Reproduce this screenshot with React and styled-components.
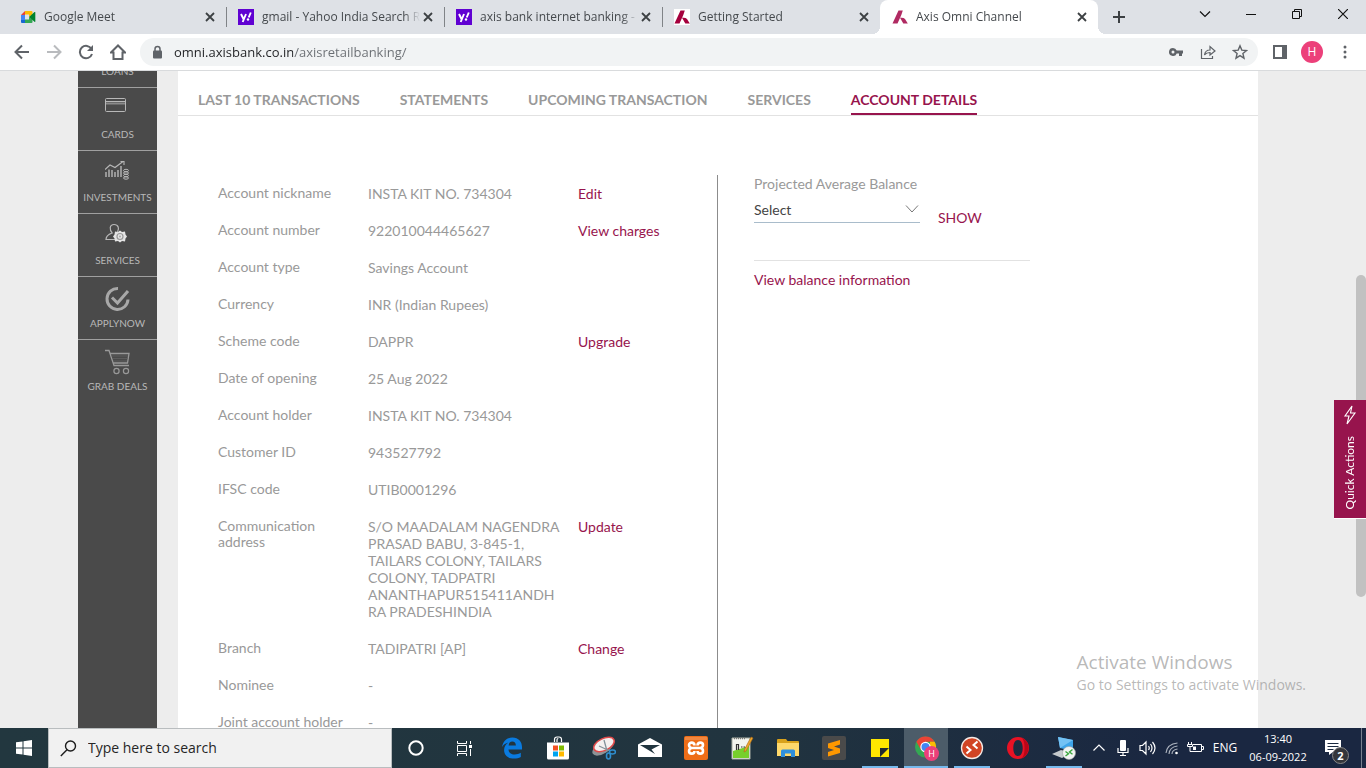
import React from "react";
import styled, { createGlobalStyle } from "styled-components";

const maroon = "#97144d";
const ui = '"Open Sans", "Noto Sans", sans-serif';
const lato = 'Lato, "Open Sans", sans-serif';

const Global = createGlobalStyle`
  * { box-sizing: border-box; }
  html, body, #root { height: 100%; }
  body { margin: 0; overflow: hidden; font-family: ${lato}; }
  button { margin: 0; padding: 0; border: 0; background: none; color: inherit; font: inherit; }
  ul, dl, dd { margin: 0; padding: 0; list-style: none; }
  a { text-decoration: none; }
  svg { display: block; flex: none; }
`;

const Shell = styled.div`
  display: flex;
  flex-direction: column;
  height: 100%;
`;

/* ---------- browser tabs ---------- */
const TabStrip = styled.header`
  display: flex;
  flex: none;
  height: 34px;
  padding-left: 8px;
  background: #dee1e6;
  font: 12px/16px ${ui};
  color: #45494d;
`;
const BrowserTab = styled.div`
  position: relative;
  display: flex;
  align-items: center;
  flex: 0 1 218px;
  min-width: 0;
  padding: 0 8px 0 12px;
  border-radius: 8px 8px 0 0;
  background: ${(p) => (p.$active ? "#fff" : "transparent")};
  &::before {
    content: "";
    position: absolute;
    left: ${(p) => (p.$active ? "-8px" : "0")};
    bottom: ${(p) => (p.$active ? "0" : "7px")};
    width: ${(p) => (p.$active ? "8px" : "1px")};
    height: ${(p) => (p.$active ? "8px" : "20px")};
    background: ${(p) =>
      p.$active ? "radial-gradient(circle at 0 0, transparent 8px, #fff 8px)" : p.$first ? "transparent" : "#808387"};
  }
  &::after {
    content: "";
    display: ${(p) => (p.$active ? "block" : "none")};
    position: absolute;
    right: -8px;
    bottom: 0;
    width: 8px;
    height: 8px;
    background: radial-gradient(circle at 100% 0, transparent 8px, #fff 8px);
  }
`;
const TabTitle = styled.span`
  flex: 1;
  min-width: 0;
  margin: 0 0 0 8px;
  overflow: hidden;
  white-space: nowrap;
  mask-image: linear-gradient(to right, #000 calc(100% - 16px), transparent);
`;
const IconButton = styled.button`
  display: grid;
  place-items: center;
  flex: none;
  width: ${(p) => p.$w || 16}px;
  height: ${(p) => p.$h || 16}px;
`;
const WindowButtons = styled.div`
  display: flex;
  margin-left: auto;
  color: #111;
`;

/* ---------- toolbar ---------- */
const Toolbar = styled.div`
  display: flex;
  align-items: center;
  flex: none;
  height: 37px;
  padding: 0 5px 0 6px;
  border-bottom: 1px solid #d9dbdd;
  background: #fff;
  color: #5f6368;
`;
const AddressBar = styled.div`
  display: flex;
  align-items: center;
  flex: 1;
  height: 28px;
  margin: 0 6px;
  padding: 0 2px 0 10px;
  border-radius: 14px;
  background: #f1f3f4;
`;
const Address = styled.input`
  flex: 1;
  min-width: 0;
  height: 24px;
  padding: 0 0 0 10px;
  border: 0;
  outline: 0;
  font: 13px/20px ${ui};
  color: transparent;
  background: linear-gradient(to right, #202124 129px, #6a6e73 129px);
  background-clip: text;
`;
const Avatar = styled.button`
  width: 22px;
  height: 22px;
  margin: 0 6px 0 5px;
  border-radius: 50%;
  background: #ec407a;
  color: #fff;
  font: 12px/22px ${ui};
`;

/* ---------- bank page ---------- */
const Page = styled.div`
  position: relative;
  display: flex;
  flex: 1;
  min-height: 0;
  overflow: hidden;
  padding: 0 108px 0 78px;
  gap: 21px;
  background: #ededed;
`;
const Sidebar = styled.nav`
  flex: none;
  width: 79px;
  background: #4a4a4a;
`;
const SideItem = styled.li`
  height: ${(p) => (p.$clipped ? 17 : 63)}px;
  overflow: hidden;
  border-bottom: 1px solid ${(p) => (p.$last ? "transparent" : "#a0a0a0")};
  display: flex;
  flex-direction: column;
  justify-content: flex-end;
`;
const SideLink = styled.a`
  display: flex;
  flex-direction: column;
  flex: none;
  height: 62px;
  padding: 9px 0;
  color: #b8b8b8;
  font-size: 10px;
  line-height: 14px;
  text-align: center;
  svg { margin-left: 27px; }
  span { margin-top: auto; }
`;
const Card = styled.main`
  display: flex;
  flex-direction: column;
  flex: 1;
  min-width: 0;
  background: #fff;
`;
const SectionTabs = styled.nav`
  display: flex;
  flex: none;
  align-items: flex-end;
  gap: 40px;
  height: 45px;
  padding: 0 20px;
  border-bottom: 1px solid #e2e2e2;
`;
const SectionTab = styled.a`
  padding-bottom: 4px;
  border-bottom: 2px solid ${(p) => (p.$active ? maroon : "transparent")};
  color: ${(p) => (p.$active ? maroon : "#999")};
  font-size: 14px;
  font-weight: 700;
  line-height: 18px;
  white-space: nowrap;
`;
const Columns = styled.div`
  display: flex;
  flex: 1;
  min-height: 0;
  margin-top: 59px;
  color: #999;
  font-size: 14px;
  line-height: 17px;
`;
const Details = styled.dl`
  flex: none;
  width: 540px;
  padding: 10px 0 0 40px;
  border-right: 1px solid #8c8c8c;
`;
const Detail = styled.div`
  display: grid;
  grid-template-columns: 140px 194px 1fr;
  column-gap: 10px;
  margin-bottom: 20px;
  dt { line-height: 16px; }
`;
const Value = styled.dd`
  overflow-wrap: break-word;
`;
const ActionCell = styled(Value)`
  padding-left: 6px;
`;
const BankLink = styled.a`
  color: ${maroon};
`;
const Balance = styled.section`
  flex: 1;
  padding-left: 36px;
`;
const BalanceForm = styled.form`
  display: flex;
  gap: 18px;
  width: 276px;
  padding-bottom: 34px;
  margin-bottom: 10px;
  border-bottom: 1px solid #e2e2e2;
`;
const Field = styled.div`
  position: relative;
  display: flex;
  flex-direction: column;
  align-self: flex-start;
  width: 166px;
  svg { position: absolute; right: 1px; bottom: 10px; pointer-events: none; }
`;
const Select = styled.select`
  appearance: none;
  height: 31px;
  padding: 4px 20px 0 0;
  border: 0;
  border-bottom: 1px solid #a9bccb;
  border-radius: 0;
  background: transparent;
  color: #444;
  font: 14px/17px ${lato};
`;
const ShowButton = styled.button`
  align-self: flex-start;
  margin-top: 34px;
  color: ${maroon};
`;
const Scrollbar = styled.div`
  position: absolute;
  right: 0;
  top: 31%;
  bottom: 20%;
  width: 10px;
  border-radius: 5px;
  background: #c1c1c1;
`;
const QuickActions = styled.button`
  position: absolute;
  right: 0;
  top: 50%;
  display: flex;
  flex-direction: column;
  align-items: center;
  gap: 11px;
  width: 32px;
  height: 119px;
  padding-top: 5px;
  border-bottom: 1px solid #fff;
  background: ${maroon};
  color: #fff;
  font-size: 12px;
  line-height: 16px;
  span { writing-mode: vertical-rl; transform: rotate(180deg); }
`;
const Watermark = styled.div`
  position: absolute;
  right: 60px;
  bottom: 33px;
  color: rgba(140, 140, 140, 0.62);
  font: 14px/20px ${ui};
  white-space: nowrap;
  strong { display: block; font-size: 19px; font-weight: 400; line-height: 26px; }
`;

/* ---------- taskbar ---------- */
const Taskbar = styled.footer`
  display: flex;
  flex: none;
  height: 40px;
  background: linear-gradient(to right, #22373f, #21343f 55%, #1a2741 85%);
  color: #fff;
  font: 12px/18px ${ui};
`;
const SearchBox = styled.label`
  display: flex;
  align-items: center;
  width: 344px;
  padding-left: 11px;
  gap: 11px;
  border: 1px solid #b9bdbf;
  background: #f1f1f1;
  color: #1c1c1c;
  input {
    flex: 1;
    min-width: 0;
    padding: 0;
    border: 0;
    outline: 0;
    background: none;
    font: 14px/20px ${ui};
    &::placeholder { color: #262626; opacity: 1; }
  }
`;
const Apps = styled.div`
  display: flex;
  gap: 2px;
  margin-left: 2px;
`;
const AppButton = styled.button`
  display: grid;
  place-items: center;
  width: 44px;
  height: 40px;
  background: ${(p) => (p.$active ? "#4c5c69" : "transparent")};
  position: relative;
  &::after {
    content: "";
    position: absolute;
    left: ${(p) => (p.$active ? 0 : 4)}px;
    right: ${(p) => (p.$active ? 0 : 4)}px;
    bottom: 0;
    height: 2px;
    background: ${(p) => (p.$open ? "#76b9ed" : "transparent")};
  }
`;
const Tray = styled.div`
  display: flex;
  align-items: center;
  margin-left: auto;
`;
const Clock = styled.time`
  width: 70px;
  font-size: 11px;
  text-align: center;
  white-space: nowrap;
`;
const Lang = styled.button`
  width: 36px;
`;
const Notices = styled.button`
  position: relative;
  display: grid;
  place-items: center;
  width: 48px;
  height: 40px;
  padding-right: 8px;
  b {
    position: absolute;
    left: 19px;
    top: 19px;
    width: 17px;
    height: 17px;
    border: 1px solid #888;
    border-radius: 50%;
    background: #34363b;
    font: 700 11px/15px ${ui};
  }
`;
const DesktopPeek = styled.button`
  width: 5px;
  height: 40px;
  border-left: 1px solid #77808e;
`;

/* ---------- drawings ---------- */
const Svg = ({ w = 16, h = w, box, children, ...rest }) => (
  <svg width={w} height={h} viewBox={box || `0 0 ${w} ${h}`} fill="none" aria-hidden="true" {...rest}>
    {children}
  </svg>
);
const line = { stroke: "currentColor", strokeWidth: 2 };
const thin = { stroke: "currentColor", strokeWidth: 1.2 };

const Meet = () => (
  <Svg>
    <path d="M1 6l4-4v4z" fill="#ea4335" />
    <path d="M5 2h6.500q1 0 1 1v2.500L9 8V5.500H5z" fill="#fbbc04" />
    <path d="M1 6h4v5H1z" fill="#4285f4" />
    <path d="M1 11h4v3H2q-1 0-1-1z" fill="#1967d2" />
    <path d="M5 10.500h4V8l3.500 2.500V13q0 1-1 1H5z" fill="#34a853" />
    <path d="M9 8l5.500-5q.8-.4.800.5v9q0 .8-.8.300z" fill="#00832d" />
  </Svg>
);
const Yahoo = () => (
  <Svg>
    <path d="M0 0h16v16H0z" fill="#6001d2" />
    <path d="M3 5l2.500 5M8 5l-3.300 8M12.800 3.500L10.700 8.500" stroke="#fff" strokeWidth="1.900" />
    <circle cx="10" cy="10.500" r="1.200" fill="#fff" />
  </Svg>
);
const Axis = ({ color = "#a5003d", tile }) => (
  <Svg>
    {tile && <path d="M0 0h16v16H0z" fill="#fff" />}
    <path d="M6.500 1.500h4.300L9.300 6 5.500 14.500H.5zM8 8.800q3.500-.6 5 1.200l2.800 4.500h-4.500z" fill={color} />
  </Svg>
);
const Close = () => <Svg w={16}><path d="M4 4l8 8M12 4l-8 8" stroke="#3c4043" strokeWidth="1.800" /></Svg>;

const appIcons = {
  Edge: (
    <Svg w={24}>
      <path d="M2 11C3.200 5 7 1.500 12.500 1.500c6 0 9.500 4.400 9.500 9.500v2.500H8.500c.2 3.300 2.800 5 6.200 5 2.300 0 4.300-.6 6.100-1.700v4.300c-2 1-4.200 1.500-6.700 1.500-6.200 0-10-3.400-10-8.600 0-3.100 1.500-5.800 4.300-7.400C5.700 7.200 3.600 8.800 2 11zm6.600-1.500h7.300c-.1-2.700-1.400-4-3.600-4s-3.400 1.500-3.700 4z" fill="#0a7be0" />
    </Svg>
  ),
  Store: (
    <Svg w={24}>
      <path d="M8.500 6V3.500Q8.500 1 11 1h2q2.500 0 2.500 2.500V6M11 6V3.800q0-1.300 1.300-1.300" stroke="#fff" strokeWidth="1.200" />
      <path d="M1 6.500h22V22q0 1.500-1.500 1.500h-19Q1 23.500 1 22z" fill="#fff" />
      <path d="M7 9.500h5v5H7z" fill="#f25022" /><path d="M13 9.500h5v5h-5z" fill="#7fba00" />
      <path d="M7 15.500h5v5H7z" fill="#00a4ef" /><path d="M13 15.500h5v5h-5z" fill="#ffb900" />
    </Svg>
  ),
  "Snipping Tool": (
    <Svg w={24}>
      <ellipse cx="11" cy="11.500" rx="12" ry="6" transform="rotate(-32 11 11.500)" fill="#8c9397" />
      <ellipse cx="12" cy="8.500" rx="11" ry="6" transform="rotate(-25 12 8.500)" fill="#f4f0f0" stroke="#df4a4a" strokeWidth="1.500" />
      <path d="M12 4l3 11M7 10l11 5" stroke="#84929b" strokeWidth="1.300" />
      <ellipse cx="20.500" cy="16" rx="3" ry="2" stroke="#2f8fd0" strokeWidth="1.600" />
      <ellipse cx="16.500" cy="20" rx="2" ry="3" stroke="#2f8fd0" strokeWidth="1.600" />
    </Svg>
  ),
  Mail: (
    <Svg w={24}>
      <path d="M12 2l12 6.500V21H0V8.500z" fill="#fff" />
      <path d="M2 9h20l-8.500 4.500L17 18 2 9z" fill="#21353f" />
    </Svg>
  ),
  XAMPP: (
    <Svg w={24}>
      <rect width="24" height="24" rx="2" fill="#ee6d17" /><path d="M1 1h22v3H1z" fill="#f59a5a" opacity=".6" />
      <path d="M10.500 9.500C10.500 5.500 5 6 5 9c0 2 1.500 3 3 3-1.500 0-3 1-3 3 0 3.500 5.500 3.500 5.500 0M13.500 9.500c0-4 5.500-3.500 5.500-.5 0 2-1.500 3-3 3 1.500 0 3 1 3 3 0 3.500-5.500 3.500-5.500 0M8 12h8" stroke="#fff" strokeWidth="2.600" />
    </Svg>
  ),
  "Notepad++": (
    <Svg w={24}>
      <path d="M2 2h18v21H2z" fill="#f3f5ef" stroke="#a9aea4" /><path d="M3 15l16-5v12H3z" fill="#77cf2c" />
      <path d="M4 2.500h12" stroke="#777" strokeWidth="1.500" strokeDasharray="1 1" />
      <path d="M6.500 14V8.500h2V14M11 11h1.500M13.500 11H15" stroke="#333" strokeWidth="1.200" />
      <path d="M21 1l2 1-7 13-2 1 .5-2.500z" fill="#f0a72c" stroke="#a76818" strokeWidth=".6" />
    </Svg>
  ),
  "File Explorer": (
    <Svg w={24}>
      <path d="M1 4q0-1 1-1h8l1.500 2H22q1 0 1 1v14H1z" fill="#d9a21b" /><path d="M1 7h22v13H1z" fill="#ffd96b" />
      <path d="M5 21v-6q0-1.500 1.500-1.500h11Q19 13.500 19 15v6h-4v-3.500H9V21z" fill="#2f8fdb" />
    </Svg>
  ),
  "Sublime Text": (
    <Svg w={24}>
      <rect width="24" height="24" rx="2" fill="#4a4a4a" />
      <path d="M18 4v4.500l-6 2 6 2v4.500L6 20.500V16l6-2-6-2V7.500z" fill="#ff9800" />
    </Svg>
  ),
  "Sticky Notes": (
    <Svg w={24}>
      <path d="M3 3h18v18H3z" fill="#ffe600" /><path d="M12 12h9l-9 9z" fill="#222b31" />
    </Svg>
  ),
  Chrome: (
    <Svg w={26}>
      <circle cx="12.500" cy="12" r="10.500" fill="#34a853" />
      <path d="M3.400 6.700A10.500 10.500 0 0 1 21.600 6.700H12.500L8 15z" fill="#ea4335" />
      <path d="M21.600 6.700A10.500 10.500 0 0 1 12.500 22.500l4.500-7.500V6.700z" fill="#fbbc04" />
      <circle cx="12.500" cy="12" r="5.200" fill="#fff" /><circle cx="12.500" cy="12" r="4" fill="#4285f4" />
      <circle cx="18.500" cy="18.500" r="7.500" fill="#ec407a" />
      <text x="18.500" y="22" fill="#fff" fontSize="9" fontFamily="Open Sans" textAnchor="middle">H</text>
    </Svg>
  ),
  "Remote Desktop": (
    <Svg w={24}>
      <circle cx="12" cy="12" r="10.500" fill="#d14424" stroke="#f4e9e5" strokeWidth="1.300" />
      <path d="M6.500 10.500l4 3.500-4 3.500M17.500 5.500l-4 3.500 4 3.500" stroke="#fff" strokeWidth="2" />
    </Svg>
  ),
  Opera: (
    <Svg w={24}>
      <path fillRule="evenodd" d="M12 1a11 11 0 1 0 0 22 11 11 0 0 0 0-22zm0 3c3 0 4.700 3.500 4.700 8S15 20 12 20s-4.700-3.500-4.700-8S9 4 12 4z" fill="#e81224" />
      <path d="M15 1.500A11 11 0 0 1 15 22.500c3-2 3.500-6 3.500-10.500S18 3.500 15 1.500z" fill="#a70014" opacity=".7" />
    </Svg>
  ),
  "Remote Session": (
    <Svg w={24}>
      <path d="M6 1l15 3v11L8 12z" fill="#3ea5ea" /><path d="M6 1l15 3L8 12z" fill="#74c2f4" />
      <path d="M0 18l9-4 10 3-9 5z" fill="#c5cacd" />
      <circle cx="17" cy="17" r="6.500" fill="#f2f4f2" stroke="#a0a5a5" strokeWidth=".6" />
      <path d="M13.500 15.500l3 2.200-3 2.300M20.500 13.500l-3 2.500 3 2.200" stroke="#38a63c" strokeWidth="1.400" />
    </Svg>
  ),
};

const Coin = ({ y }) => <ellipse cx="21" cy={y} rx="2.500" ry="1.200" stroke="currentColor" />;
const sideIcons = {
  CARDS: (
    <Svg w={22} h={18}>
      <rect x=".5" y="1.500" width="20" height="13" rx="1" stroke="currentColor" />
      <path d="M1 4.500h19" stroke="currentColor" /><path d="M1 6.500h19" stroke="#8a8a8a" strokeWidth="2" />
    </Svg>
  ),
  INVESTMENTS: (
    <Svg w={25} h={22}>
      <path d="M1 17v-5M4 17V9.500M7 17v-7M10 17v-5M13 17v-7M16 17V6" stroke="currentColor" strokeWidth="1.400" />
      <path d="M0 9.500l5-4.500 5 2.500 8-6M15.500 1.500H19V5" stroke="currentColor" strokeWidth="1.100" />
      <Coin y={10.5} /><Coin y={13} /><Coin y={15.5} /><Coin y={18} />
    </Svg>
  ),
  SERVICES: (
    <Svg w={22} h={24}>
      <path d="M7 10C3 11.500 1 13.500 1 16.500h9M7.500 10.500C4 7 4.500 1.500 9 1.500s5.500 4 3.500 7.500" stroke="currentColor" strokeWidth="1.200" />
      <path d="M15 7.500l2 1.500 3-.5.500 3 1.500 2-1.500 2-.5 3-3-.500-2 1.500-2-1.500-3 .500-.5-3L8 13.500l1.500-2 .500-3 3 .5z" fill="#e4e4e4" />
      <circle cx="15" cy="13.500" r="3" stroke="#999" strokeWidth="1.200" /><circle cx="15" cy="13.500" r="1" fill="#aaa" />
    </Svg>
  ),
  APPLYNOW: (
    <Svg w={26}>
      <path d="M13 2.500A10.500 10.500 0 1 0 23 13.500" stroke="#a8a8a8" strokeWidth="3" />
      <path d="M7 11.500l5.500 5.500L23 5" stroke="#a8a8a8" strokeWidth="3" />
    </Svg>
  ),
  "GRAB DEALS": (
    <Svg w={26}>
      <path d="M0 1.500h4l5 15h15M5.500 4.500H24l-1.500 9.500H8.500" stroke="#999" strokeWidth="1.300" />
      <path d="M6.500 7H23M7.500 9.500H23M8 12h14" stroke="#666" strokeWidth=".7" />
      <circle cx="11.500" cy="22" r="2.600" stroke="#999" strokeWidth="1.200" /><circle cx="21" cy="22" r="2.600" stroke="#999" strokeWidth="1.200" />
    </Svg>
  ),
};

const browserTabs = [
  { title: "Google Meet", icon: <Meet />, first: true },
  { title: "gmail - Yahoo India Search Results", icon: <Yahoo /> },
  { title: "axis bank internet banking - Yahoo India", icon: <Yahoo /> },
  { title: "Getting Started", icon: <Axis tile /> },
  { title: "Axis Omni Channel", icon: <Axis color="#b02a62" />, active: true },
];
const sideItems = ["LOANS", "CARDS", "INVESTMENTS", "SERVICES", "APPLYNOW", "GRAB DEALS"];
const sections = ["LAST 10 TRANSACTIONS", "STATEMENTS", "UPCOMING TRANSACTION", "SERVICES", "ACCOUNT DETAILS"];
const details = [
  ["Account nickname", "INSTA KIT NO. 734304", "Edit"],
  ["Account number", "922010044465627", "View charges"],
  ["Account type", "Savings Account"],
  ["Currency", "INR (Indian Rupees)"],
  ["Scheme code", "DAPPR", "Upgrade"],
  ["Date of opening", "25 Aug 2022"],
  ["Account holder", "INSTA KIT NO. 734304"],
  ["Customer ID", "943527792"],
  ["IFSC code", "UTIB0001296"],
  ["Communication address", "S/O MAADALAM NAGENDRA PRASAD BABU, 3-845-1, TAILARS COLONY, TAILARS COLONY, TADPATRI ANANTHAPUR515411ANDHRA PRADESHINDIA", "Update"],
  ["Branch", "TADIPATRI [AP]", "Change"],
  ["Nominee", "-"],
  ["Joint account holder", "-"],
];
const openApps = ["Sticky Notes", "Chrome", "Remote Desktop", "Remote Session"];

function BrowserChrome() {
  return (
    <>
      <TabStrip>
        {browserTabs.map((t) => (
          <BrowserTab key={t.title} $active={t.active} $first={t.first}>
            {t.icon}
            <TabTitle>{t.title}</TabTitle>
            <IconButton aria-label={`Close ${t.title}`}><Close /></IconButton>
          </BrowserTab>
        ))}
        <IconButton aria-label="New tab" $w={42} $h={34}>
          <Svg w={14}><path d="M7 1v12M1 7h12" stroke="#3c4043" strokeWidth="2" /></Svg>
        </IconButton>
        <WindowButtons>
          <IconButton aria-label="Search tabs" $w={46} $h={28}><Svg w={12}><path d="M1 3.500l5 5 5-5" {...thin} /></Svg></IconButton>
          <IconButton aria-label="Minimize" $w={46} $h={28}><Svg w={10}><path d="M0 5.500h10" stroke="currentColor" /></Svg></IconButton>
          <IconButton aria-label="Restore" $w={46} $h={28}><Svg w={10}><path d="M.5 2.500h7v7h-7zM2.500 2V.5h7v7H8" stroke="currentColor" /></Svg></IconButton>
          <IconButton aria-label="Close window" $w={46} $h={28}><Svg w={10}><path d="M0 0l10 10M10 0L0 10" {...thin} /></Svg></IconButton>
        </WindowButtons>
      </TabStrip>
      <Toolbar>
        <IconButton aria-label="Back" $w={32} $h={32}><Svg><path d="M15 8H2M8 1.500L1.500 8 8 14.500" {...line} /></Svg></IconButton>
        <IconButton aria-label="Forward" $w={32} $h={32}><Svg><path d="M1 8h13M8 1.500L14.500 8 8 14.500" stroke="#b9bbbe" strokeWidth="2" /></Svg></IconButton>
        <IconButton aria-label="Reload" $w={32} $h={32}><Svg><path d="M13.500 5A6.200 6.200 0 1 0 14 10" {...line} /><path d="M15 1v6H9z" fill="currentColor" /></Svg></IconButton>
        <IconButton aria-label="Home" $w={32} $h={32}><Svg><path d="M1 8.500h2.500V15h9V8.500H15L8 1.500z" {...line} /></Svg></IconButton>
        <AddressBar>
          <Svg w={14}><rect x="3" y="5.500" width="9" height="8" rx="1" fill="currentColor" /><path d="M5 6V4q0-2.500 2.500-2.500T10 4v2" stroke="currentColor" strokeWidth="1.500" /></Svg>
          <Address aria-label="Address" defaultValue="omni.axisbank.co.in/axisretailbanking/" />
          <IconButton aria-label="Passwords" $w={32} $h={28}>
            <Svg><path fillRule="evenodd" d="M5 4a4 4 0 1 0 3.700 5.500H11V12h3V9.500h1v-3H8.700A4 4 0 0 0 5 4zm0 2.500a1.500 1.500 0 1 1 0 3 1.500 1.500 0 0 1 0-3z" fill="currentColor" /></Svg>
          </IconButton>
          <IconButton aria-label="Share" $w={32} $h={28}>
            <Svg><path d="M1.500 5v9.500h11V12M4.500 11c.5-3.500 2.500-5 5.500-5V2.500l5 4.500-5 4V8.500c-2.500 0-4 .5-5.500 2.500z" {...thin} /></Svg>
          </IconButton>
          <IconButton aria-label="Bookmark" $w={32} $h={28}>
            <Svg><path d="M8 1.800l1.800 4.300 4.700.4-3.600 3 1.100 4.700-4-2.500-4 2.500 1.100-4.700-3.600-3 4.700-.4z" stroke="currentColor" strokeWidth="1.400" /></Svg>
          </IconButton>
        </AddressBar>
        <IconButton aria-label="Side panel" $w={32} $h={32}><Svg w={14}><path fillRule="evenodd" d="M0 0h14v14H0zM2 2v10h7V2z" fill="currentColor" /></Svg></IconButton>
        <Avatar aria-label="Profile">H</Avatar>
        <IconButton aria-label="Menu" $w={32} $h={32}>
          <Svg><circle cx="8" cy="3" r="1.500" fill="currentColor" /><circle cx="8" cy="8" r="1.500" fill="currentColor" /><circle cx="8" cy="13" r="1.500" fill="currentColor" /></Svg>
        </IconButton>
      </Toolbar>
    </>
  );
}

function WindowsTaskbar() {
  return (
    <Taskbar>
      <IconButton aria-label="Start" $w={48} $h={40}>
        <Svg><path d="M0 2.300L6.500 1.400v6.100H0zM7.500 1.200L16 0v7.500H7.500zM0 8.500h6.500v6.100L0 13.700zM7.500 8.500H16V16l-8.500-1.200z" fill="#fff" /></Svg>
      </IconButton>
      <SearchBox>
        <Svg w={17}><circle cx="10.500" cy="6" r="5" stroke="currentColor" strokeWidth="1.400" /><path d="M7 9.700L.8 16" stroke="currentColor" strokeWidth="1.400" /></Svg>
        <input type="search" aria-label="Search Windows" placeholder="Type here to search" />
      </SearchBox>
      <IconButton aria-label="Cortana" $w={48} $h={40}><Svg><circle cx="8" cy="8" r="6.700" {...line} /></Svg></IconButton>
      <IconButton aria-label="Task view" $w={48} $h={40}>
        <Svg w={17}><path d="M1.500 1v2.500h9V1M1.500 16v-2.500h9V16M1.500 5.500h9v6h-9zM14.500 1v3M14.500 9v7" stroke="currentColor" /><path d="M13 5h3v3h-3z" fill="currentColor" /></Svg>
      </IconButton>
      <Apps>
        {Object.keys(appIcons).map((name) => (
          <AppButton key={name} aria-label={name} $active={name === "Chrome"} $open={openApps.includes(name)}>
            {appIcons[name]}
          </AppButton>
        ))}
      </Apps>
      <Tray>
        <IconButton aria-label="Hidden icons" $w={24} $h={40}><Svg w={12}><path d="M0.500 8.500L6 3l5.500 5.500" {...thin} /></Svg></IconButton>
        <IconButton aria-label="Microphone" $w={24} $h={40}><Svg><rect x="5" y="0" width="6" height="11" rx="1" fill="#fff" /><path d="M3 8v4.500h10V8M8 12.500V15M5 15.500h6" {...thin} /></Svg></IconButton>
        <IconButton aria-label="Volume" $w={25} $h={40}><Svg w={17} h={16}><path d="M1 5.500h2.500L7 2v12l-3.500-3.500H1zM9.500 6q1.500 2 0 4M11.500 4q3 4 0 8M13.500 2q5 6 0 12" {...thin} /></Svg></IconButton>
        <IconButton aria-label="Network" $w={24} $h={40}><Svg w={14}><g stroke="#aeb5c0" strokeWidth="1.100"><path d="M1 12Q2 3 12.500 2M4 13Q4.500 6 12.500 5M7 13Q7 9 12.500 8" /></g><circle cx="11.500" cy="12" r="1.300" fill="#fff" /></Svg></IconButton>
        <IconButton aria-label="Battery" $w={23} $h={40}><Svg w={17} h={14}><path d="M6 3.500h8.500v7H5.500M14.500 5.500h2v3h-2M1.500 1v2M4.500 1v2M.5 3.500h5v2h-5zM3 6v4.500h3" stroke="currentColor" /><path d="M6 5.500h3V9H6z" fill="#fff" /></Svg></IconButton>
        <Lang>ENG</Lang>
        <Clock dateTime="2022-09-06T13:40">13:40<br />06-09-2022</Clock>
        <Notices aria-label="2 notifications">
          <Svg w={16}><path d="M0 0h16v12H8l-4 3v-3H0z" fill="#fff" /><path d="M2.500 3.500h11M2.500 6.500h11M2.500 9.500h6" stroke="#1b2a40" /></Svg>
          <b>2</b>
        </Notices>
        <DesktopPeek aria-label="Show desktop" />
      </Tray>
    </Taskbar>
  );
}

export default function App() {
  return (
    <Shell>
      <Global />
      <BrowserChrome />
      <Page>
        <Sidebar aria-label="Main">
          <ul>
            {sideItems.map((name, i) => (
              <SideItem key={name} $clipped={i === 0} $last={i === sideItems.length - 1}>
                <SideLink href="#">{sideIcons[name]}<span>{name}</span></SideLink>
              </SideItem>
            ))}
          </ul>
        </Sidebar>
        <Card>
          <SectionTabs aria-label="Account sections">
            {sections.map((s) => (
              <SectionTab key={s} href="#" $active={s === "ACCOUNT DETAILS"}>{s}</SectionTab>
            ))}
          </SectionTabs>
          <Columns>
            <Details>
              {details.map(([label, value, action]) => (
                <Detail key={label}>
                  <dt>{label}</dt>
                  <Value>{value}</Value>
                  {action && <ActionCell><BankLink href="#">{action}</BankLink></ActionCell>}
                </Detail>
              ))}
            </Details>
            <Balance>
              <BalanceForm onSubmit={(e) => e.preventDefault()}>
                <Field>
                  <label htmlFor="period">Projected Average Balance</label>
                  <Select id="period"><option>Select</option></Select>
                  <Svg w={14} h={8}><path d="M1 .500l6 6.500 6-6.500" stroke="#777" /></Svg>
                </Field>
                <ShowButton type="submit">SHOW</ShowButton>
              </BalanceForm>
              <BankLink href="#">View balance information</BankLink>
            </Balance>
          </Columns>
        </Card>
        <Scrollbar />
        <QuickActions>
          <Svg w={14} h={20}><path d="M9 1L2 11h4l-2 8 8-11H7.500z" stroke="currentColor" strokeWidth="1.100" /></Svg>
          <span>Quick Actions</span>
        </QuickActions>
        <Watermark><strong>Activate Windows</strong>Go to Settings to activate Windows.</Watermark>
      </Page>
      <WindowsTaskbar />
    </Shell>
  );
}
